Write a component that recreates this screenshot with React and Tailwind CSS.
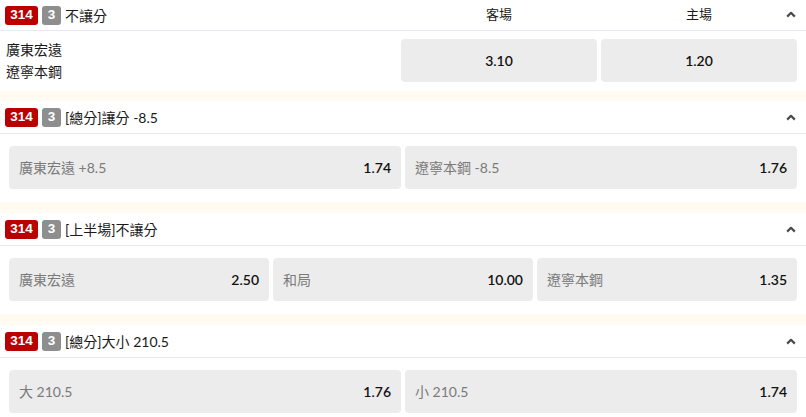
import React from 'react';

const markets = [
  {
    title: '[總分]讓分 -8.5',
    cols: 'grid-cols-2',
    picks: [
      ['廣東宏遠 +8.5', '1.74'],
      ['遼寧本鋼 -8.5', '1.76'],
    ],
  },
  {
    title: '[上半場]不讓分',
    cols: 'grid-cols-3',
    picks: [
      ['廣東宏遠', '2.50'],
      ['和局', '10.00'],
      ['遼寧本鋼', '1.35'],
    ],
  },
  {
    title: '[總分]大小 210.5',
    cols: 'grid-cols-2',
    picks: [
      ['大 210.5', '1.76'],
      ['小 210.5', '1.74'],
    ],
  },
];

const Badges = () => (
  <div className="flex items-center gap-1 font-['Liberation_Sans',Arial,sans-serif] text-[13.5px] font-bold text-white">
    <span className="flex h-[19px] w-[33px] items-center justify-center rounded-[3px] bg-[#bb0000]">314</span>
    <span className="flex h-[19px] w-[19px] items-center justify-center rounded-[3px] bg-[#8e8e8e]">3</span>
  </div>
);

const Chevron = () => (
  <svg width="10" height="7" viewBox="0 0 10 7" className="shrink-0">
    <path d="M1.2 5.6 L5 1.8 L8.8 5.6" fill="none" stroke="#4a4a4a" strokeWidth="2.2" strokeLinejoin="round" />
  </svg>
);

const Market = ({ title, cols, picks }) => (
  <div>
    <div className="flex h-[33px] items-center border-b border-[#e8e8f2] pl-[5px] pr-[10px]">
      <Badges />
      <span className="ml-1 flex-1 text-[14px] text-[#1a1a1a]">{title}</span>
      <Chevron />
    </div>
    <div className={`grid ${cols} gap-1 pt-3 pb-[13px] pl-[9px] pr-[9px]`}>
      {picks.map(([label, odd]) => (
        <button key={label} className="flex h-[43px] items-center justify-between rounded bg-[#ececec] px-[10px]">
          <span className="text-[14px] text-[#7a7a7a]">{label}</span>
          <span className="text-[14px] font-semibold text-[#111]">{odd}</span>
        </button>
      ))}
    </div>
    <div className="h-[11px] bg-[#fffbf0]" />
  </div>
);

export default function App() {
  return (
    <div className="h-[417px] w-[806px] overflow-hidden bg-white font-['Lato','Noto_Sans_CJK_TC',sans-serif]">
      {/* moneyline block, odds laid out under the team columns */}
      <div>
        <div className="relative flex h-[31px] items-center border-b border-[#e8e8f2] pl-[5px] pr-[9px]">
          <Badges />
          <span className="ml-1 flex-1 text-[14px] text-[#1a1a1a]">不讓分</span>
          <span className="w-[196px] text-center text-[13px] text-[#1a1a1a]">客場</span>
          <span className="ml-1 w-[196px] text-center text-[13px] text-[#1a1a1a]">主場</span>
          <div className="absolute right-[10px] top-[11px]">
            <Chevron />
          </div>
        </div>
        <div className="grid grid-cols-[1fr_196px_196px] gap-1 py-2 pl-[6px] pr-[9px]">
          <div className="flex flex-col justify-center text-[14px] leading-[22px] text-[#1a1a1a]">
            <span>廣東宏遠</span>
            <span>遼寧本鋼</span>
          </div>
          <button className="flex h-[43px] items-center justify-center rounded bg-[#ececec] text-[14px] font-semibold text-[#111]">3.10</button>
          <button className="flex h-[43px] items-center justify-center rounded bg-[#ececec] text-[14px] font-semibold text-[#111]">1.20</button>
        </div>
        <div className="h-[10px] bg-[#fffbf0]" />
      </div>
      {markets.map((m) => (
        <Market key={m.title} {...m} />
      ))}
    </div>
  );
}
